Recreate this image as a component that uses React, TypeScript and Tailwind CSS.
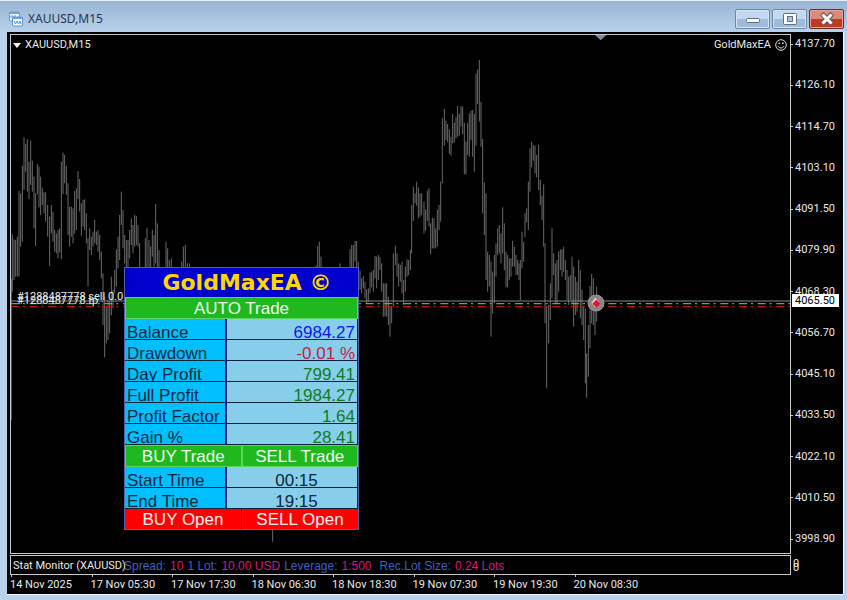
import React from "react";

type Bar = [x: number, high: number, low: number];
type Section = { dx: number; dy: number; bars: Bar[] };

const sections: Section[] = [
  {
    dx: 0,
    dy: 0,
    bars: [
      [37, 703, 875], [42, 718, 840], [47, 720, 830], [52, 710, 830], [57, 573, 830], [62, 580, 740],
      [67, 497, 725], [72, 412, 570], [77, 432, 515], [82, 418, 575], [87, 485, 597], [92, 422, 555],
      [97, 482, 575], [102, 530, 685], [107, 580, 738], [112, 492, 583], [117, 500, 622], [122, 530, 645],
      [127, 563, 615], [132, 577, 640], [137, 577, 665], [143, 615, 710], [149, 650, 798], [154, 615, 700],
      [159, 635, 725], [164, 690, 755], [169, 700, 760], [174, 690, 775], [179, 685, 757], [184, 485, 777],
      [189, 458, 582], [194, 465, 550], [199, 497, 585], [204, 550, 705], [209, 620, 740], [214, 620, 710],
      [219, 625, 730], [224, 573, 700], [229, 565, 690], [234, 513, 597], [239, 537, 635], [244, 610, 707],
      [249, 600, 680], [254, 598, 690], [259, 640, 730], [264, 715, 858], [269, 685, 750], [274, 710, 765],
      [279, 695, 740], [284, 660, 730], [289, 695, 735], [294, 690, 755], [299, 705, 780], [304, 755, 835],
      [309, 820, 975], [314, 890, 1072], [319, 920, 1030], [324, 900, 1020], [329, 905, 1000], [334, 830, 945],
      [339, 870, 925], [344, 810, 880], [349, 748, 860], [354, 710, 805], [359, 645, 780], [364, 575, 675],
      [369, 630, 745], [374, 705, 790], [379, 720, 805], [384, 720, 802], [389, 690, 775], [394, 655, 735],
      [399, 675, 760], [404, 645, 740], [409, 648, 735], [414, 675, 740], [419, 730, 805], [436, 715, 805],
      [441, 683, 805], [447, 720, 805], [452, 740, 805], [457, 690, 770], [462, 705, 805], [467, 612, 790],
      [472, 670, 805], [477, 750, 805], [498, 725, 805], [503, 745, 805], [508, 780, 805], [514, 775, 805],
      [545, 785, 805], [550, 740, 805], [556, 735, 805], [562, 790, 805], [569, 790, 805], [818, 1580, 1625],
    ],
  },
  {
    dx: 600,
    dy: 540,
    bars: [
      [348, 257, 270], [353, 198, 270], [358, 185, 270], [363, 230, 270], [420, 250, 270], [450, 207, 270],
      [455, 195, 270], [460, 195, 270], [465, 183, 245], [470, 183, 270], [475, 245, 300],
    ],
  },
  {
    dx: 1020,
    dy: 600,
    bars: [
      [60, 212, 270], [65, 235, 280], [70, 228, 265], [75, 245, 295], [80, 268, 310], [85, 265, 305],
      [90, 218, 280], [95, 215, 262], [100, 210, 275], [105, 168, 235], [110, 170, 265], [115, 165, 240],
      [120, 172, 210], [125, 190, 275], [130, 250, 350], [135, 250, 350], [140, 250, 350], [145, 290, 375],
      [150, 320, 410], [155, 320, 370], [160, 160, 320], [166, 137, 195], [171, 160, 230], [176, 190, 260],
      [181, 195, 245], [186, 185, 280], [191, 240, 315], [196, 200, 275], [201, 178, 230], [206, 180, 225],
      [211, 150, 210], [443, 155, 275], [448, 165, 260], [453, 185, 410], [458, 215, 340], [463, 165, 310],
      [468, 130, 230], [473, 85, 165], [478, 75, 160], [483, 100, 190], [488, 22, 160], [493, 70, 210],
      [498, 155, 262], [503, 165, 262], [508, 175, 240], [513, 175, 230], [518, 122, 200], [523, 140, 200],
      [528, 165, 225], [533, 180, 225], [537, 190, 240], [541, 180, 300], [546, 95, 205], [551, 125, 185],
      [615, 130, 370], [620, 320, 565], [626, 315, 430], [631, 250, 360], [636, 85, 295], [641, 160, 225],
      [646, 190, 310], [651, 180, 310], [656, 155, 275], [661, 148, 210], [666, 148, 230], [671, 140, 215],
      [676, 180, 240], [681, 210, 300], [686, 230, 315], [691, 225, 300], [696, 170, 310], [701, 200, 380],
      [706, 230, 345], [711, 245, 335], [716, 180, 305], [721, 210, 355], [726, 270, 375], [731, 320, 420],
      [736, 325, 550], [740, 460, 593], [745, 375, 530], [750, 258, 445], [755, 222, 370], [760, 235, 375],
      [765, 285, 405], [770, 260, 365],
    ],
  },
  {
    dx: 1080,
    dy: 120,
    bars: [
      [155, 495, 640], [160, 440, 543], [165, 460, 490], [170, 425, 497], [175, 442, 535], [180, 460, 530],
      [185, 460, 525], [192, 485, 580], [197, 508, 572], [202, 452, 543], [207, 445, 560], [212, 550, 643],
      [217, 533, 625], [222, 535, 625], [227, 565, 625], [232, 510, 620], [237, 495, 570], [242, 425, 545],
      [247, 235, 430], [253, 207, 317], [258, 242, 300], [263, 252, 307], [268, 268, 342], [273, 290, 347],
      [278, 222, 310], [283, 248, 308], [288, 230, 295], [293, 198, 290], [298, 222, 287], [303, 198, 260],
      [308, 200, 283], [313, 248, 403], [318, 305, 403], [323, 248, 345], [328, 220, 350], [333, 212, 300],
      [338, 210, 350], [343, 222, 395], [348, 100, 317], [353, 88, 192], [358, 60, 245], [363, 185, 320],
      [368, 297, 520], [373, 427, 585], [378, 460, 720], [495, 520, 592], [500, 505, 548], [505, 425, 570],
      [510, 325, 455], [515, 305, 382], [520, 315, 362], [525, 317, 400], [530, 345, 412], [536, 315, 450],
      [541, 420, 495], [546, 467, 540], [551, 433, 620],
    ],
  },
];

const barPath = sections
  .flatMap((s) => s.bars.map(([x, h, l]) => `M${x + s.dx} ${h + s.dy}V${l + s.dy}`))
  .join("");

const prices = [
  "4137.70", "4126.10", "4114.70", "4103.10", "4091.50", "4079.90", "4068.30",
  "4056.70", "4045.10", "4033.50", "4022.10", "4010.50", "3998.90",
];

const times = [
  "14 Nov 2025", "17 Nov 05:30", "17 Nov 17:30", "18 Nov 06:30",
  "18 Nov 18:30", "19 Nov 07:30", "19 Nov 19:30", "20 Nov 08:30",
];

const stats = [
  { label: "Balance", value: "6984.27", color: "text-[#1414f0]" },
  { label: "Drawdown", value: "-0.01 %", color: "text-[#c8203c]" },
  { label: "Day Profit", value: "799.41", color: "text-[#107c20]" },
  { label: "Full Profit", value: "1984.27", color: "text-[#107c20]" },
  { label: "Profit Factor", value: "1.64", color: "text-[#107c20]" },
  { label: "Gain %", value: "28.41", color: "text-[#107c20]" },
];

const hours = [
  { label: "Start Time", value: "00:15" },
  { label: "End Time", value: "19:15" },
];

function TitleBar() {
  const glass =
    "flex h-5 w-[35px] items-center justify-center rounded-[2px] border border-[#6f86a3] bg-linear-to-b from-[#c3d8ee] from-50% to-[#9dbbdb] to-50% shadow-[inset_0_0_0_1px_#d3e4f5]";
  return (
    <header className="flex h-8 shrink-0 items-center border-t border-[#e6f1fb] bg-linear-to-b from-[#98b4d2] to-[#b9d2ec] pr-[3px] pl-2 pt-1">
      <svg viewBox="0 0 16 16" className="size-4 shrink-0" fill="none">
        <rect x="1.5" y="1" width="10" height="9" rx="1" fill="#eef6ff" stroke="#6b9bd2" />
        <path d="M1.5 2h10" stroke="#6fa0d8" strokeWidth="2" />
        <path d="M3 7V5h2v2h2V4" stroke="#6b9bd2" />
        <rect x="4.5" y="6" width="10" height="9" rx="1" fill="#f7fbff" stroke="#5b90cc" />
        <path d="M4.500 7h10" stroke="#6fa0d8" strokeWidth="2" />
        <path d="M6 10l1.500 3 1.500-3 1.500 3 1.500-3 1 3" stroke="#5b90cc" />
      </svg>
      <h1 className="ml-1 flex-1 font-['Noto_Sans',sans-serif] text-[12px] text-[#26364a]">XAUUSD,M15</h1>
      <div className="flex gap-[2px]">
        <button aria-label="Minimize" className={glass}>
          <svg viewBox="0 0 16 14" className="h-3.5 w-4">
            <rect x="1.500" y="6.500" width="13" height="4" rx="1" fill="#fff" stroke="#5f6f84" />
          </svg>
        </button>
        <button aria-label="Maximize" className={glass}>
          <svg viewBox="0 0 16 14" className="h-3.5 w-4" fill="none">
            <rect x="1.500" y="1.500" width="13" height="11" rx="1" fill="#fff" stroke="#5f6f84" />
            <rect x="5.500" y="4.500" width="5" height="5" fill="#a9c4e0" stroke="#5f6f84" />
          </svg>
        </button>
        <button
          aria-label="Close"
          className="flex h-5 w-[35px] items-center justify-center rounded-[2px] border border-[#6b2a2a] bg-linear-to-b from-[#dc8a7c] from-50% to-[#bf3a22] to-50% shadow-[inset_0_0_0_1px_#e6a498]"
        >
          <svg viewBox="0 0 16 14" className="h-3.5 w-4" fill="none" strokeLinecap="square">
            <path d="M4.500 3.500l7 7M11.500 3.500l-7 7" stroke="#6a5560" strokeWidth="5" />
            <path d="M4.500 3.500l7 7M11.500 3.500l-7 7" stroke="#fff" strokeWidth="3" />
          </svg>
        </button>
      </div>
    </header>
  );
}

function PriceChart() {
  return (
    <svg viewBox="33 105 2337 1554" preserveAspectRatio="none" className="absolute inset-0 size-full" fill="none">
      <path d={barPath} stroke="#6a6a6a" strokeWidth="3" />
      <path d="M34.500 836V1260" stroke="#555" strokeWidth="3" />
      <path d="M33 903H2370" stroke="#7d8c93" strokeWidth="3" />
      <path d="M33 911H2370" stroke="#32cd32" strokeWidth="4" strokeDasharray="24 12 6 14" />
      <path d="M33 920H2370" stroke="#c01818" strokeWidth="4" strokeDasharray="24 12 6 14" />
      <path d="M1785 105h34l-17 16z" fill="#7d8ea3" />
      <circle cx="1788" cy="909" r="24" fill="#8a8685" stroke="#9c9896" strokeWidth="3" />
      <path d="M1786 893l12 16-12 14-12-14z" fill="#e8d0d0" />
      <path d="M1789 899l12 12-12 12-12-12z" fill="#e0142c" />
    </svg>
  );
}

function TradePanel() {
  const label = "h-[21px] overflow-hidden border-b border-[#06243c] bg-[#00bfff] pl-[2px] text-left font-normal leading-7 text-[#06283c]";
  const cell = "h-[21px] overflow-hidden border-b border-l-2 border-b-[#06243c] border-l-[#0a1c80] bg-[#87ceeb] leading-7";
  const green = "h-[22px] flex-1 border border-[#5fd35f] bg-[#1fb81f] text-center leading-[22px] text-[#f2fff0]";
  const red = "h-5 flex-1 bg-[#ff0000] text-center leading-[22px] text-[#fff0f0]";
  return (
    <section className="absolute top-[232px] left-[113px] w-[235px] border border-[#5560a8] bg-[#0a1c80] font-['Liberation_Sans',Arial,sans-serif] text-[17px]">
      <h2 className="h-[29px] bg-[#0000cd] pl-[11px] text-center font-['DejaVu_Sans',sans-serif] text-[22px] leading-[30px] font-bold text-[#ffd700]">
        GoldMaxEA ©
      </h2>
      <div className="flex">
        <button className={green}>AUTO Trade</button>
      </div>
      <table className="w-full table-fixed border-separate border-spacing-0 pr-px">
        <tbody>
          {stats.map((s) => (
            <tr key={s.label}>
              <th scope="row" className={`${label} w-[100px] whitespace-nowrap`}>
                <div className="h-5 overflow-hidden">{s.label}</div>
              </th>
              <td className={`${cell} pr-[2px] text-right ${s.color}`}>
                <div className="h-5 overflow-hidden">{s.value}</div>
              </td>
            </tr>
          ))}
        </tbody>
      </table>
      <div className="flex">
        <button className={green}>BUY Trade</button>
        <button className={green}>SELL Trade</button>
      </div>
      <table className="w-full table-fixed border-separate border-spacing-0 pr-px">
        <tbody>
          {hours.map((h) => (
            <tr key={h.label}>
              <th scope="row" className={`${label} w-[100px] whitespace-nowrap`}>
                <div className="h-5 overflow-hidden">{h.label}</div>
              </th>
              <td className={`${cell} pl-[9px] text-center text-[#06283c]`}>
                <div className="h-5 overflow-hidden">{h.value}</div>
              </td>
            </tr>
          ))}
        </tbody>
      </table>
      <div className="flex gap-px">
        <button className={red}>BUY Open</button>
        <button className={red}>SELL Open</button>
      </div>
    </section>
  );
}

function StatMonitor() {
  const name = "text-[#3f5fc8]";
  const value = "text-[#d81880]";
  return (
    <div className="flex flex-1 items-center overflow-hidden border border-[#c8c8c8] pt-[2px] pl-[2px] whitespace-nowrap">
      <span className="w-[111px] shrink-0">Stat Monitor (XAUUSD)</span>
      <div className="flex gap-1 font-['Liberation_Sans',Arial,sans-serif] text-[12px]">
        <span className={name}>Spread:</span>
        <span className={value}>10</span>
        <span className={name}>1 Lot:</span>
        <span className={value}>10.00 USD</span>
        <span className={name}>Leverage:</span>
        <span className={`${value} mr-1`}>1:500</span>
        <span className={name}>Rec.Lot Size:</span>
        <span className={value}>0.24 Lots</span>
      </div>
    </div>
  );
}

export default function App() {
  return (
    <div className="flex h-screen min-h-[560px] flex-col bg-[#b9d1ea]">
      <TitleBar />
      <main className="mr-1 mb-[6px] ml-[7px] flex flex-1 flex-col bg-black pt-[2px] pl-[3px] font-[Roboto,sans-serif] text-[11px] text-[#e8e8e8] shadow-[0_1px_0_#f4f9ff,1px_0_0_#f4f9ff]">
        <div className="flex flex-1">
          <div className="relative flex-1 overflow-hidden border border-[#c8c8c8]">
            <PriceChart />
            <div className="relative flex items-center justify-between pt-px pr-[3px] pl-[2px]">
              <div className="flex items-center gap-1">
                <svg viewBox="0 0 8 5" className="h-[5px] w-2">
                  <path d="M0 0h8L4 5z" fill="#fff" />
                </svg>
                <span className="leading-[18px]">XAUUSD,M15</span>
              </div>
              <div className="flex items-center gap-1">
                <span className="leading-[18px]">GoldMaxEA</span>
                <svg viewBox="0 0 12 12" className="size-3" fill="none" stroke="#d8e0d0">
                  <circle cx="6" cy="6" r="5.300" />
                  <path d="M3 7.200c1 2.400 5 2.400 6 0" />
                  <path d="M4.200 3.500v1.500M7.800 3.500v1.500" strokeWidth="1.500" />
                </svg>
              </div>
            </div>
            <span className="absolute top-[255px] left-[6px] leading-[14px]">#1288487778 sell 0.01</span>
            <span className="absolute top-[259px] left-[6px] leading-[14px]">#1288487778 tp</span>
            <TradePanel />
          </div>
          <div className="relative flex w-[52px] shrink-0 flex-col justify-between pt-[3px] pb-[8px]">
            {prices.map((p) => (
              <div key={p} className="flex h-[14px] items-center gap-[2px]">
                <i className="h-px w-[2px] bg-[#c8c8c8]" />
                <span className="leading-[14px]">{p}</span>
              </div>
            ))}
            <div className="absolute top-[260px] left-px h-[13px] w-[47px] bg-white pl-[3px] leading-[14px] text-black">
              4065.50
            </div>
          </div>
        </div>
        <div className="mt-px flex h-5">
          <StatMonitor />
          <div className="flex w-[52px] shrink-0 flex-col justify-center pt-[2px] pl-[2px] leading-1">
            <span>0</span>
            <span>0</span>
          </div>
        </div>
        <div className="flex h-[19px]">
          {times.map((t) => (
            <div key={t} className="w-[9.665%] shrink-0 whitespace-nowrap">
              <i className="ml-px block h-[2px] w-px bg-[#c8c8c8]" />
              <span className="block leading-4">{t}</span>
            </div>
          ))}
        </div>
      </main>
    </div>
  );
}
